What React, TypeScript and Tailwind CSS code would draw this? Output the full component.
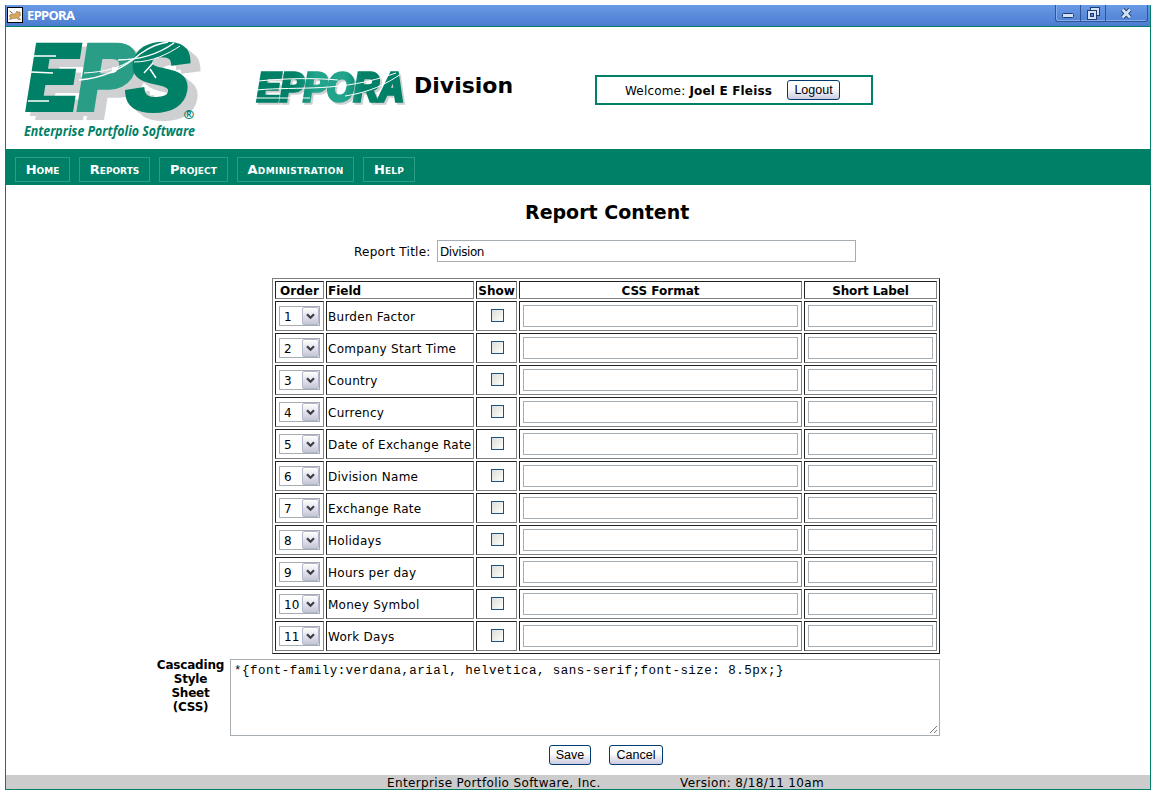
const fields = ["Burden Factor", "Company Start Time", "Country", "Currency", "Date of Exchange Rate", "Division Name", "Exchange Rate", "Holidays", "Hours per day", "Money Symbol", "Work Days"];
const menu = [
  { label: "Home", w: "w-[55px]" },
  { label: "Reports", w: "w-[71px]" },
  { label: "Project", w: "w-[69px] tracking-[0.1px]" },
  { label: "Administration", w: "w-[117px] tracking-[0.35px]" },
  { label: "Help", w: "w-[52px] tracking-[0.1px]" },
];
const inset = "border border-t-[#222] border-l-[#222] border-r-[#808080] border-b-[#808080]";
const head = "pt-px leading-[17px] ";

function EpsLogo() {
  const letter = (ch: string, x: number, w: number, fill: string) => (
    <text x={x} y="0" textLength={w} lengthAdjust="spacingAndGlyphs" fill={fill} stroke={fill} strokeWidth="6">{ch}</text>
  );
  return (
    <svg width="186" height="110" viewBox="18 34 186 110" className="block">
      <g className="[filter:drop-shadow(5px_4px_0_#cfd0d1)_drop-shadow(5px_4px_0_#cfd0d1)]">
        <g transform="translate(28 109) skewX(-9)" fontFamily="Liberation Sans" fontWeight="700" fontSize="92">
          {letter("E", -5, 51, "#008066")}
          {letter("P", 46, 56, "#2a9d87")}
          {letter("S", 95, 62, "#008066")}
        </g>
      </g>
      <g fill="none" stroke="#fff" strokeWidth="1.5">
        <path d="M79 80C105 78 125 67 140 54C151 46 158 44 168 42" />
        <path d="M84 73C104 72 120 68 133 59" strokeWidth="1" />
        <path d="M118 60C142 60 160 53 174 43" />
        <path d="M134 62C152 62 168 54 180 46" strokeWidth="1" />
        <path d="M144 73L153 63M156 78L150 69" />
        <path d="M34 56H56M31 72L53 73M28 101H49" />
      </g>
      <text x="189" y="119" textAnchor="middle" fontFamily="Open Sans" fontWeight="700" fontSize="13" fill="#008066">®</text>
      <text x="24" y="136" textLength="171" lengthAdjust="spacingAndGlyphs" fontFamily="Open Sans" fontWeight="700" fontStyle="italic" fontSize="14" fill="#008066">Enterprise Portfolio Software</text>
    </svg>
  );
}

function EpporaLogo() {
  return (
    <svg width="160" height="48" viewBox="250 62 160 48" className="block">
      <defs>
        <linearGradient id="eppora"><stop offset="0.25" stopColor="#008066" /><stop offset="0.4" stopColor="#22a38c" /><stop offset="0.6" stopColor="#22a38c" /><stop offset="0.72" stopColor="#008066" /></linearGradient>
      </defs>
      <text x="257" y="101" textLength="147" lengthAdjust="spacingAndGlyphs" fontFamily="Liberation Sans" fontWeight="700" fontStyle="italic" fontSize="41" fill="url(#eppora)" stroke="url(#eppora)" strokeWidth="3.6" className="[filter:drop-shadow(2px_2px_0_#cfd0d1)]">EPPORA</text>
      <g fill="none" stroke="#fff" strokeWidth="1">
        <path d="M258 81C290 78 315 78 338 80" />
        <path d="M256 90C300 86 340 93 396 73" />
        <path d="M345 96C370 92 385 85 404 72" />
        <path d="M256 98H310" />
      </g>
    </svg>
  );
}

function Order({ n }: { n: number }) {
  return (
    <div className="flex h-5 w-[41px] justify-between border border-[#a5acb2] bg-white">
      <span className="pt-px pl-1 text-[12px] leading-[18px]">{n}</span>
      <span className="flex h-[18px] w-[17px] items-center justify-center rounded-[2px] border border-[#b4b8cb] bg-linear-to-b from-white to-[#c6c7d8]">
        <svg width="9" height="7" viewBox="0 0 9 7" className="block"><path d="M1 1.2L4.500 4.700L8 1.2" fill="none" stroke="#3d3d46" strokeWidth="2.2" /></svg>
      </span>
    </div>
  );
}

function Button({ children, className }: { children: string; className: string }) {
  return <button className={"flex h-5 items-center justify-center rounded-[3px] border border-[#003c74] bg-linear-to-b from-white from-40% to-[#cdcbe0] pt-px font-['Liberation_Sans',sans-serif] text-[12.5px] " + className}>{children}</button>;
}

export default function App() {
  return (
    <div className="h-[793px] w-[1156px] overflow-hidden bg-white pt-[5px] pl-[5px] font-['DejaVu_Sans',sans-serif] text-[12px] text-black">
      <div className="flex h-[785px] w-[1146px] flex-col border-r border-b border-l border-[#008066]">
        <header className="flex h-[22px] shrink-0 items-start justify-between border-b border-[#008066] bg-linear-to-b from-[#6a9be6] to-[#4b7bd0]">
          <div className="flex items-center gap-1 pt-[2px] pl-px">
            <svg width="16" height="16" viewBox="0 0 16 16" className="block">
              <rect x=".5" y=".5" width="15" height="15" fill="#fff" stroke="#000" />
              <path d="M2 9l2-2h4l2-3 1 1h2l.5 3.500-2 1.500 2 2.500h-2l-2-1.500-3 .5-4 1 1-2z" fill="#d7a75b" stroke="#7a6240" strokeWidth=".5" />
              <path d="M2.500 4l3 2" stroke="#7a6240" />
            </svg>
            <span className="font-['Noto_Sans',sans-serif] text-[13px] leading-4 font-bold tracking-[-0.65px] text-white">EPPORA</span>
          </div>
          <div className="mr-[2px] flex h-[17px] rounded-b-[3px] border-x border-b border-[#2f5596] shadow-[inset_1px_-1px_0_#86aeea]">
            <span className="flex w-[25px] items-center justify-center border-r border-[#2f5596] pt-[5px]"><svg width="12" height="5"><rect x=".5" y=".5" width="11" height="4" rx="1" fill="#d2e0f8" stroke="#1f3d70" /></svg></span>
            <span className="flex w-[25px] items-center justify-center border-r border-[#2f5596]"><svg width="13" height="13"><g fill="#d2e0f8" stroke="#1f3d70"><rect x="3.500" y=".5" width="9" height="8" /><rect x=".5" y="3.500" width="9" height="9" /><rect x="3.500" y="6.500" width="3" height="3" fill="#5585d6" /></g></svg></span>
            <span className="flex w-[41px] items-center justify-center"><svg width="13" height="11"><path d="M2.500 1.500L10 9.500M10 1.500L2.500 9.500" stroke="#1f3d70" strokeWidth="4.600" /><path d="M2.500 1.500L10 9.500M10 1.500L2.500 9.500" stroke="#d2e0f8" strokeWidth="2.6" /></svg></span>
          </div>
        </header>

        <div className="flex h-[122px] shrink-0 items-start pt-[7px] pl-3">
          <EpsLogo />
          <div className="mt-7 ml-[46px]"><EpporaLogo /></div>
          <h1 className="mt-[38px] ml-1 w-[186px] text-[22px] leading-7 font-bold whitespace-nowrap">Division</h1>
          <div className="mt-[41px] -ml-[5px] flex h-[30px] w-[278px] items-center border-2 border-[#008066] pl-7">
            <span className="w-[162px] pt-px tracking-[0.18px] whitespace-nowrap">Welcome: <b>Joel E Fleiss</b></span>
            <Button className="w-[53px]">Logout</Button>
          </div>
        </div>

        <nav className="flex h-9 shrink-0 gap-[9px] bg-[#008066] pt-2 pl-[9px]">
          {menu.map((m) => <a key={m.label} className={"flex h-[25px] items-center justify-center border border-[#2a9d87] text-[13px] font-bold text-white [font-variant:small-caps] " + m.w}>{m.label}</a>)}
        </nav>

        <main className="flex flex-col">
          <h2 className="mt-[13px] ml-[519px] h-[28px] text-[19px] leading-[28px] font-bold whitespace-nowrap">Report Content</h2>
          <div className="mt-[14px] ml-[348px] flex h-[22px] items-center">
            <label className="w-[83px] pt-px tracking-[0.25px] whitespace-nowrap">Report Title:</label>
            <div className="flex h-[22px] w-[419px] items-center border border-[#a5acb2] pt-px pl-[2px] tracking-[-0.45px]">Division</div>
          </div>
          <div className="mt-4 ml-[266px] grid h-[376px] w-[668px] grid-cols-[49px_148px_41px_283px_133px] grid-rows-[18px] gap-[2px] border border-t-[#808080] border-r-[#222] border-b-[#222] border-l-[#808080] p-[2px]">
            <b className={"text-center " + head + inset}>Order</b>
            <b className={"pl-px " + head + inset}>Field</b>
            <b className={"text-center " + head + inset}>Show</b>
            <b className={"text-center " + head + inset}>CSS Format</b>
            <b className={"text-center tracking-[-0.1px] " + head + inset}>Short Label</b>
            {fields.map((f, i) => (
              <div key={f} className="contents">
                <div className={"flex h-[30px] items-center pl-[3px] " + inset}><Order n={i + 1} /></div>
                <div className={"flex h-[30px] items-center pt-px pl-px tracking-[0.27px] whitespace-nowrap " + inset}>{f}</div>
                <div className={"flex h-[30px] justify-center pt-[7px] " + inset}><span className="ml-[2px] size-[13px] border border-[#1d5180] bg-linear-to-br from-[#dcdcd7] to-white" /></div>
                <div className={"flex h-[30px] items-center pl-[3px] " + inset}><span className="h-[22px] w-[275px] border border-[#a5acb2]" /></div>
                <div className={"flex h-[30px] items-center pl-[3px] " + inset}><span className="h-[22px] w-[125px] border border-[#a5acb2]" /></div>
              </div>
            ))}
          </div>
          <div className="mt-[5px] ml-[145px] flex">
            <div className="-mt-px w-[79px] text-center leading-[14px] font-bold tracking-[-0.2px]">Cascading<br />Style<br />Sheet<br />(CSS)</div>
            <div className="flex h-[77px] w-[710px] items-end justify-between border border-[#a5acb2]">
              <pre className="self-start pt-1 pl-[3px] font-['Liberation_Mono',monospace] text-[12.5px] leading-[14px] tracking-[0.47px]">{"*{font-family:verdana,arial, helvetica, sans-serif;font-size: 8.5px;}"}</pre>
              <svg width="10" height="10"><path d="M1 8L8 1M5 8L8 5" stroke="#777" /></svg>
            </div>
          </div>
          <div className="mt-[9px] ml-[543px] flex gap-[18px]">
            <Button className="w-[42px]">Save</Button>
            <Button className="w-[54px]">Cancel</Button>
          </div>
        </main>
        <footer className="mt-auto flex h-[14px] shrink-0 items-center bg-[#ccc] pt-[2px] pl-[381px] tracking-[0.37px] whitespace-nowrap">
          <span className="w-[293px]">Enterprise Portfolio Software, Inc.</span>
          <span>Version: 8/18/11 10am</span>
        </footer>
      </div>
    </div>
  );
}
